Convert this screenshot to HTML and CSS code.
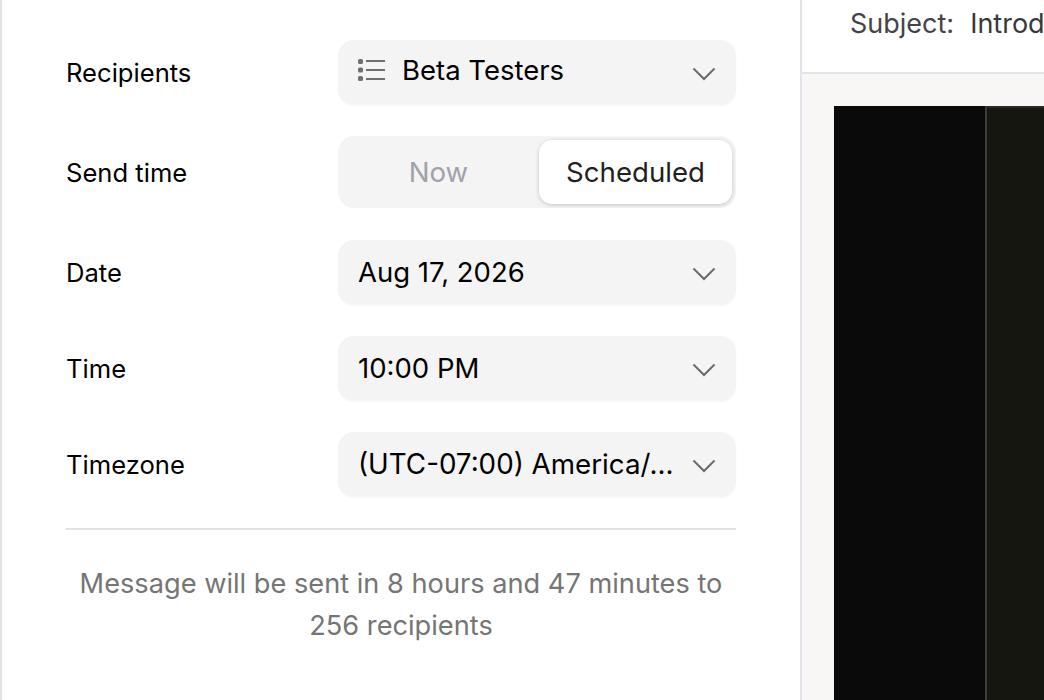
FILE: index.html
```html
<!DOCTYPE html>
<html lang="en">
<head>
<meta charset="utf-8">
<title>Schedule message</title>
<link rel="stylesheet" href="styles.css">
</head>
<body>
<div class="app">
  <section class="settings">
    <div class="form">
      <div class="row">
        <span class="label">Recipients</span>
        <div class="select">
          <svg class="list-icon" width="28" height="24" viewBox="0 0 28 24" fill="none">
            <rect x="0" y="1" width="5" height="5" rx="1.6" fill="#6f6f6f"/>
            <rect x="0" y="9.5" width="5" height="5" rx="1.6" fill="#6f6f6f"/>
            <rect x="0" y="18" width="5" height="5" rx="1.6" fill="#6f6f6f"/>
            <path d="M8 3h19M8 12h19M8 21h19" stroke="#6f6f6f" stroke-width="2"/>
          </svg>
          <span class="value value-recipients">Beta Testers</span>
          <svg class="chevron" width="24" height="14" viewBox="0 0 24 14" fill="none"><path d="M1.5 1.5 12 12 22.5 1.5" stroke="#6b6b6b" stroke-width="2"/></svg>
        </div>
      </div>
      <div class="row row-seg">
        <span class="label">Send time</span>
        <div class="segmented">
          <span class="seg seg-off">Now</span>
          <span class="seg seg-on">Scheduled</span>
        </div>
      </div>
      <div class="row">
        <span class="label">Date</span>
        <div class="select">
          <span class="value">Aug 17, 2026</span>
          <svg class="chevron" width="24" height="14" viewBox="0 0 24 14" fill="none"><path d="M1.5 1.5 12 12 22.5 1.5" stroke="#6b6b6b" stroke-width="2"/></svg>
        </div>
      </div>
      <div class="row">
        <span class="label">Time</span>
        <div class="select">
          <span class="value">10:00 PM</span>
          <svg class="chevron" width="24" height="14" viewBox="0 0 24 14" fill="none"><path d="M1.5 1.5 12 12 22.5 1.5" stroke="#6b6b6b" stroke-width="2"/></svg>
        </div>
      </div>
      <div class="row">
        <span class="label">Timezone</span>
        <div class="select">
          <span class="value value-tz">(UTC-07:00) America/...</span>
          <svg class="chevron" width="24" height="14" viewBox="0 0 24 14" fill="none"><path d="M1.5 1.5 12 12 22.5 1.5" stroke="#6b6b6b" stroke-width="2"/></svg>
        </div>
      </div>
    </div>
    <p class="note">Message will be sent in 8 hours and 47 minutes to 256 recipients</p>
  </section>
  <section class="preview">
    <header class="subject"><span class="subject-key">Subject:</span><span class="subject-val">Introducing our new beta</span></header>
    <div class="canvas">
      <div class="shot">
        <div class="shot-left"></div>
        <div class="shot-right"></div>
      </div>
    </div>
  </section>
</div>
</body>
</html>
```
FILE: styles.css
```css
* { box-sizing: border-box; }
html, body { margin: 0; height: 100%; overflow: hidden; background: #fff; }
body { font-family: Inter, "Liberation Sans", sans-serif; color: #000; }
.app { display: flex; width: 1044px; height: 700px; }
.settings {
  flex: 0 0 802px;
  height: 700px;
  padding: 40px 64px 0 64px;
  border-left: 2px solid #e4e3ea;
  border-right: 2px solid #e4e3ea;
}
.form { display: flex; flex-direction: column; gap: 31px; padding-bottom: 31px; border-bottom: 2px solid #e2e2e6; }
.row { display: flex; align-items: center; justify-content: space-between; height: 65px; }
.row-seg { height: 73px; align-items: flex-start; }
.row-seg .label { margin-top: 19px; }
.label { font-size: 25.6px; line-height: 36px; color: #000; }
.select {
  width: 398px;
  height: 65px;
  display: flex;
  align-items: center;
  padding: 0 20px;
  background: #f4f4f5;
  border-radius: 16px;
  box-shadow: 0 1px 2px rgba(0,0,0,0.04);
}
.list-icon { flex: none; margin-right: 16px; margin-top: -6px; }
.value { flex: 1; font-size: 27.5px; line-height: 36px; color: #000; white-space: nowrap; overflow: hidden; margin-top: -2px; }
.value-recipients { margin-top: -6px; }
.value-tz { font-size: 27.75px; }
.chevron { flex: none; margin-left: 8px; margin-top: 2px; }
.segmented {
  width: 398px;
  height: 72px;
  padding: 4px;
  display: flex;
  background: #f4f4f5;
  border-radius: 16px;
}
.seg { display: flex; align-items: center; justify-content: center; font-size: 27.6px; line-height: 36px; border-radius: 13px; }
.seg-off { flex: 0 0 193px; color: #a1a1aa; }
.seg-on { flex: 1; margin-left: 4px; background: #fff; color: #1f1f22; box-shadow: 0 1px 4px rgba(0,0,0,0.2); }
.note { margin: 33px 0 0; text-align: center; font-size: 27.2px; line-height: 42px; color: #757575; }
.preview { flex: 1; min-width: 0; display: flex; flex-direction: column; height: 700px; }
.subject {
  flex: 0 0 74px;
  display: flex;
  gap: 16px;
  padding: 6px 0 0 49px;
  border-bottom: 2px solid #e4e4e7;
  font-size: 27px;
  line-height: 36px;
  color: #444448;
  white-space: nowrap;
  overflow: hidden;
}
.subject-key { margin-left: -1px; }
.subject-val { color: #38383c; }
.canvas { flex: 1; background: #f8f7f6; padding: 32px 0 0 32px; overflow: hidden; }
.shot { display: flex; height: 100%; width: 210px; }
.shot-left { flex: 0 0 151px; background: #0a0a0a; }
.shot-right { flex: 1; background: #14160f; border-left: 2px solid #3d3d3b; border-top: 2px solid #2a2b27; }
```
